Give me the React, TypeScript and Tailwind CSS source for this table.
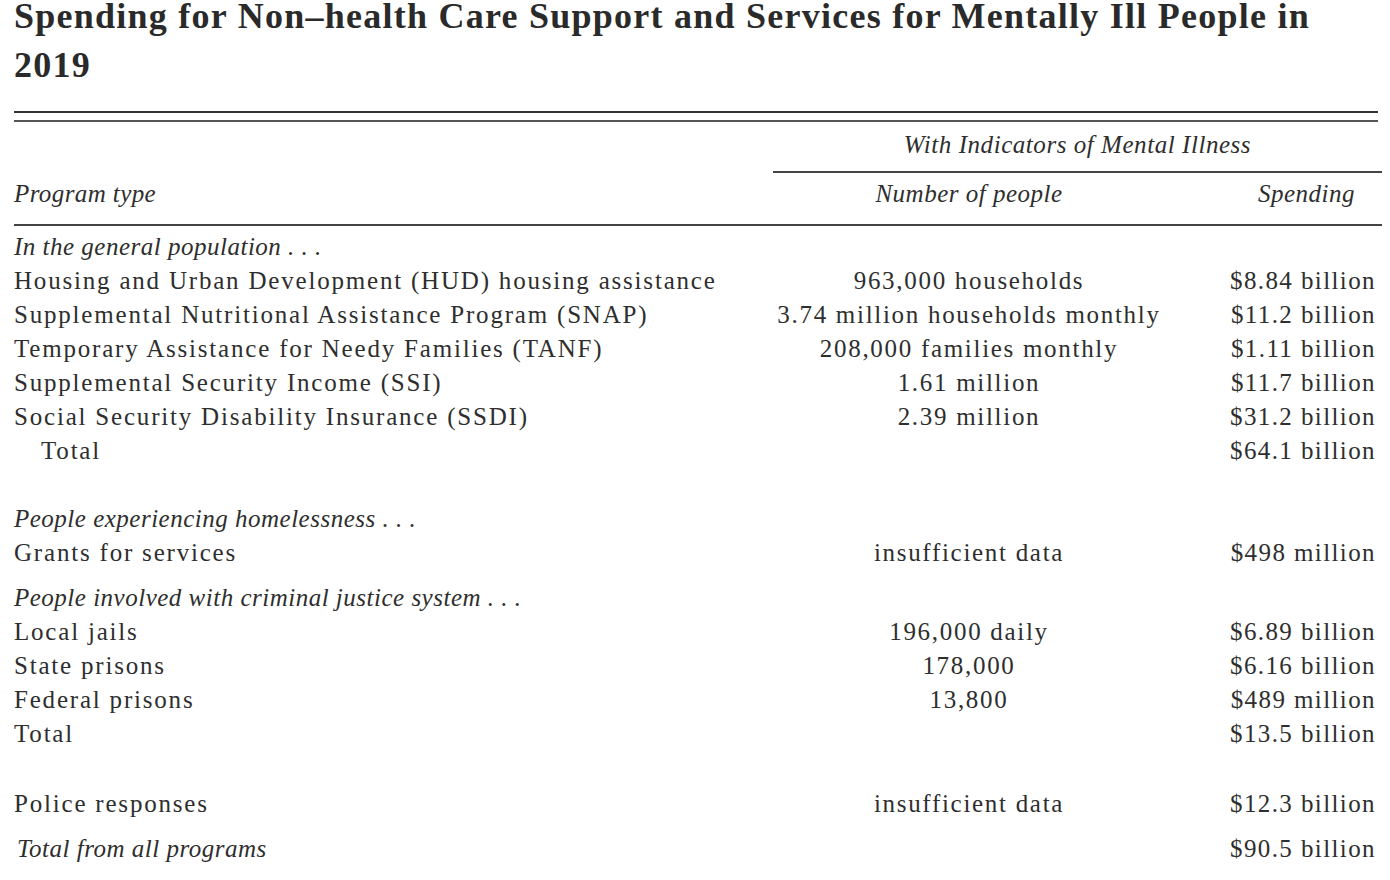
import React from "react";

const serif = { fontFamily: '"Liberation Serif", "Times New Roman", serif' };

type Row = { label: string; num?: string; spend?: string; kind?: "section" | "item" | "total" | "grand" };

const general: Row[] = [
  { label: "In the general population . . .", kind: "section" },
  { label: "Housing and Urban Development (HUD) housing assistance", num: "963,000 households", spend: "$8.84 billion" },
  { label: "Supplemental Nutritional Assistance Program (SNAP)", num: "3.74 million households monthly", spend: "$11.2 billion" },
  { label: "Temporary Assistance for Needy Families (TANF)", num: "208,000 families monthly", spend: "$1.11 billion" },
  { label: "Supplemental Security Income (SSI)", num: "1.61 million", spend: "$11.7 billion" },
  { label: "Social Security Disability Insurance (SSDI)", num: "2.39 million", spend: "$31.2 billion" },
  { label: "Total", spend: "$64.1 billion", kind: "total" },
];

function Cells({ r }: { r: Row }) {
  const italic = r.kind === "section" || r.kind === "grand";
  return (
    <>
      <div
        className={`${italic ? "italic tracking-[0.5px]" : "tracking-[1.8px]"} ${r.kind === "total" ? "pl-[27px]" : ""} ${
          r.kind === "grand" ? "pl-[3px]" : ""
        } whitespace-nowrap`}
      >
        {r.label}
      </div>
      <div className="text-center whitespace-nowrap tracking-[1.7px]">{r.num ?? ""}</div>
      <div className="text-right pr-[6px] whitespace-nowrap tracking-[1.4px]">{r.spend ?? ""}</div>
    </>
  );
}

export default function App() {
  return (
    <div className="w-[1390px] h-[880px] bg-white text-[#2e2e2e] overflow-hidden" style={serif}>
      <div className="pl-[14px] pr-[8px]">
        <h1 className="font-bold text-[36px] text-[#2a2a2a] tracking-[1.25px] whitespace-nowrap">
          <div className="leading-[32px]">Spending for Non–health Care Support and Services for Mentally Ill People in</div>
          <div className="mt-[9px] leading-[48px]">2019</div>
        </h1>
        <div className="mt-[22px] mr-[4px] h-[2px] bg-[#333]" />
        <div className="mt-[7px] mr-[4px] h-[1.5px] bg-[#555]" />
        <div className="grid grid-cols-[759px_392px_1fr] text-[25px] leading-[34px]">
          <div />
          <div className="col-span-2 text-center italic tracking-[0.55px] pt-[6px] pb-[9px] border-b-2 border-[#444]">
            With Indicators of Mental Illness
          </div>
          <div className="italic tracking-[0.4px] pt-[4px] pb-[13px] border-b-2 border-[#444]">Program type</div>
          <div className="italic tracking-[0.5px] text-center pt-[4px] pb-[13px] border-b-2 border-[#444]">Number of people</div>
          <div className="italic tracking-[0.5px] text-right pr-[27px] pt-[4px] pb-[13px] border-b-2 border-[#444]">Spending</div>
          <div className="col-span-3 h-[4px]" />
          {general.map((r, i) => (
            <Cells key={i} r={r} />
          ))}
          <div className="col-span-3 h-[34px]" />
          <Cells r={{ label: "People experiencing homelessness . . .", kind: "section" }} />
          <Cells r={{ label: "Grants for services", num: "insufficient data", spend: "$498 million" }} />
          <div className="col-span-3 h-[11px]" />
          <Cells r={{ label: "People involved with criminal justice system . . .", kind: "section" }} />
          <Cells r={{ label: "Local jails", num: "196,000 daily", spend: "$6.89 billion" }} />
          <Cells r={{ label: "State prisons", num: "178,000", spend: "$6.16 billion" }} />
          <Cells r={{ label: "Federal prisons", num: "13,800", spend: "$489 million" }} />
          <Cells r={{ label: "Total", spend: "$13.5 billion" }} />
          <div className="col-span-3 h-[36px]" />
          <Cells r={{ label: "Police responses", num: "insufficient data", spend: "$12.3 billion" }} />
          <div className="col-span-3 h-[11px]" />
          <Cells r={{ label: "Total from all programs", spend: "$90.5 billion", kind: "grand" }} />
        </div>
      </div>
    </div>
  );
}
